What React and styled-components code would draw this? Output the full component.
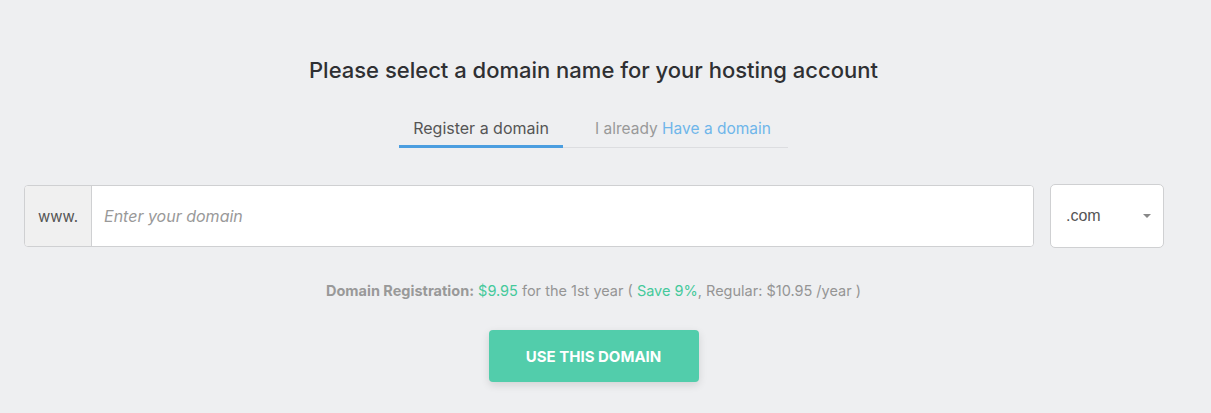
import styled, { createGlobalStyle } from "styled-components";

const Global = createGlobalStyle`
  body {
    margin: 0;
    background: #eeeff1;
    font-family: "Inter", "Roboto", sans-serif;
  }
`;

const Page = styled.section`
  width: 1187px;
  height: 413px;
  display: flex;
  flex-direction: column;
  align-items: center;
  padding-top: 56px;
  box-sizing: border-box;
`;

const Title = styled.h2`
  margin: 0;
  font-size: 22px;
  font-weight: 500;
  color: #2f3033;
  line-height: 28px;
`;

const Tabs = styled.div`
  display: flex;
  margin-top: 26px;
  width: 389px;
  border-bottom: 1px solid #dcdde0;
`;

const Tab = styled.div`
  height: 38px;
  display: flex;
  align-items: center;
  justify-content: ${(p) => (p.active ? "center" : "flex-start")};
  box-sizing: border-box;
  font-size: ${(p) => (p.active ? "16px" : "15.5px")};
  color: ${(p) => (p.active ? "#555" : "#999")};
  width: ${(p) => (p.active ? "164px" : "auto")};
  flex: ${(p) => (p.active ? "none" : "1")};
  border-bottom: ${(p) => (p.active ? "3px solid #4b9ee0" : "none")};
  margin-bottom: -1px;
  padding-left: ${(p) => (p.active ? "0" : "32px")};
  padding-bottom: ${(p) => (p.active ? "0" : "2px")};

  span {
    color: #6fb6ea;
  }
`;

const Row = styled.div`
  display: flex;
  align-self: stretch;
  padding: 0 23px 0 24px;
  margin-top: 37px;
  gap: 16px;
`;

const InputGroup = styled.div`
  flex: 1;
  display: flex;
  height: 62px;
  border: 1px solid #cfd0d2;
  border-radius: 4px;
  overflow: hidden;
  background: #fff;
  box-sizing: border-box;
`;

const Prefix = styled.div`
  width: 66px;
  display: flex;
  align-items: center;
  justify-content: center;
  background: #f0f0f0;
  border-right: 1px solid #cfd0d2;
  font-size: 15px;
  color: #555;
`;

const Input = styled.input`
  flex: 1;
  border: none;
  outline: none;
  padding: 0 12px;
  font-family: "Inter", sans-serif;
  font-size: 16px;
  color: #555;
  background: #fff;

  &::placeholder {
    font-style: italic;
    color: #999;
  }
`;

const Select = styled.div`
  width: 114px;
  height: 64px;
  margin-top: -1px;
  box-sizing: border-box;
  border: 1px solid #cfd0d2;
  border-radius: 5px;
  background: #fff;
  display: flex;
  align-items: center;
  justify-content: space-between;
  padding: 0 12px 0 15px;
  font-family: "Liberation Sans", Arial, sans-serif;
  font-size: 16px;
  color: #555;
`;

const Caret = styled.span`
  width: 0;
  height: 0;
  border-left: 4px solid transparent;
  border-right: 4px solid transparent;
  border-top: 4px solid #888;
`;

const Info = styled.p`
  margin: 34px 0 0;
  font-size: 14.5px;
  line-height: 18px;
  color: #959595;

  b {
    font-weight: 700;
    color: #999;
  }
  em {
    font-style: normal;
    color: #45c99b;
  }
`;

const Button = styled.button`
  margin-top: 30px;
  width: 210px;
  height: 52px;
  border: none;
  border-radius: 4px;
  background: #52cdab;
  color: #fff;
  font-family: "Inter", sans-serif;
  font-weight: 700;
  font-size: 15px;
  text-transform: uppercase;
  box-shadow: 0 3px 8px rgba(0, 0, 0, 0.12);
`;

export default function App() {
  return (
    <>
      <Global />
      <Page>
        <Title>Please select a domain name for your hosting account</Title>
        <Tabs>
          <Tab active>Register a domain</Tab>
          <Tab>
            I already&nbsp;<span>Have a domain</span>
          </Tab>
        </Tabs>
        <Row>
          <InputGroup>
            <Prefix>www.</Prefix>
            <Input placeholder="Enter your domain" />
          </InputGroup>
          <Select>
            .com
            <Caret />
          </Select>
        </Row>
        <Info>
          <b>Domain Registration:</b> <em>$9.95</em> for the 1st year ({" "}
          <em>Save 9%</em>, Regular: $10.95 /year )
        </Info>
        <Button>Use this domain</Button>
      </Page>
    </>
  );
}
